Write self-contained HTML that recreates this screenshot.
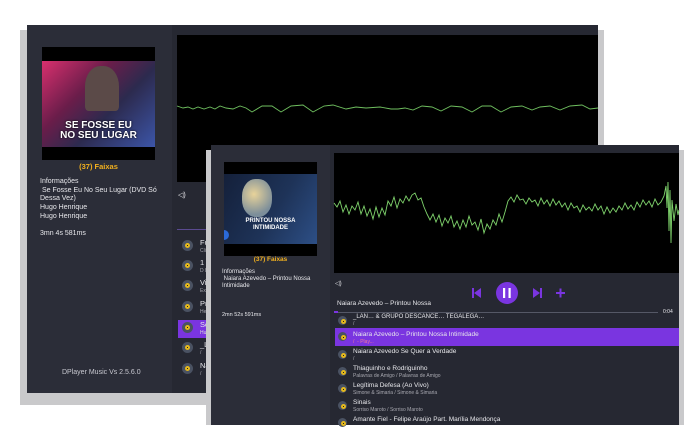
<!DOCTYPE html>
<html><head><meta charset="utf-8"><style>
*{margin:0;padding:0;box-sizing:border-box}
body{width:686px;height:425px;background:#fff;position:relative;overflow:hidden;font-family:"Liberation Sans",sans-serif;color:#e6e6ea}
.abs{position:absolute}
.t{position:absolute;font-size:7.5px;line-height:9px;color:#e8e8ec;white-space:nowrap}
.s{position:absolute;font-size:5px;color:#a8a8b0;white-space:nowrap}
.ic{position:absolute;width:11px;height:11px;border-radius:50%;background:#4a5262;}
.ic:after{content:"";position:absolute;left:3px;top:3px;width:5px;height:5px;border-radius:50%;background:#e5b91c}
.ic:before{content:"";position:absolute;left:5px;top:5px;width:1px;height:1px;background:#222;z-index:2}
</style></head><body>
<!-- back window shadow -->
<div class="abs" style="left:20px;top:30px;width:584px;height:375px;background:#c9c9cb"></div>
<!-- back window -->
<div class="abs" style="left:27px;top:25px;width:571px;height:368px;background:#2b2d38"></div>
<div class="abs" style="left:172px;top:25px;width:426px;height:368px;background:#262832"></div>
<div class="abs" style="left:177px;top:35px;width:421px;height:147px;background:#000"></div>
<svg class="abs" style="left:0;top:0" width="686" height="425">
<polyline fill="none" stroke="#6fbf5f" stroke-width="0.9" points="177,106 183,108 188,107 193,109 198,107 204,109 210,107 215,109 220,106 226,108 233,109 240,106 246,108 252,112 262,106 272,106 281,112 291,106 303,105 313,112 324,106 333,105 346,109 356,107 366,108 380,107 391,109 398,109 405,108 413,110 422,106 432,107 441,111 451,106 462,107 472,112 482,106 491,106 501,112 511,107 522,106 532,110 540,107 550,106 560,110 570,106 582,105 590,109 598,108"/>
</svg>
<div class="abs" style="left:42px;top:47px;width:113px;height:113px;background:#000"></div>
<div class="abs" style="left:42px;top:61px;width:113px;height:86px;background:linear-gradient(135deg,#d9306e 0%,#6a1d4a 35%,#2c2a4e 60%,#3c55a8 100%)"></div>
<div class="abs" style="left:85px;top:66px;width:34px;height:45px;border-radius:45% 45% 10% 10%;background:#5b4a48"></div>
<div class="abs" style="left:42px;top:121px;width:113px;text-align:center;font:bold 10px/10px 'Liberation Sans',sans-serif;color:#fff;text-shadow:0 0 2px #000">SE FOSSE EU<br>NO SEU LUGAR</div>
<div class="abs" style="left:42px;top:162px;width:113px;text-align:center;font:bold 7.5px 'Liberation Sans';color:#f2b01e">(37) Faixas</div>
<div class="t" style="left:40px;top:178px;line-height:8.7px;font-size:7px">Informações<br>&nbsp;Se Fosse Eu No Seu Lugar (DVD Só<br>Dessa Vez)<br>Hugo Henrique<br>Hugo Henrique<br><br>3mn 4s 581ms</div>
<div class="t" style="left:62px;top:368px;font-size:7px;color:#c8c8d0">DPlayer Music Vs 2.5.6.0</div>
<div class="t" style="left:178px;top:191px;font-size:7px">◁)</div>
<div class="abs" style="left:177px;top:229px;width:35px;height:1px;background:#5a4a90"></div>
<div class="abs" style="left:178px;top:320px;width:34px;height:18px;background:#7a35e0"></div>
<div class="ic" style="left:182px;top:240px"></div><div class="t" style="left:200px;top:238px">Fut</div><div class="s" style="left:200px;top:248px">Cli</div>
<div class="ic" style="left:182px;top:260px"></div><div class="t" style="left:200px;top:258px">1 M</div><div class="s" style="left:200px;top:268px">D B</div>
<div class="ic" style="left:182px;top:280px"></div><div class="t" style="left:200px;top:278px">Viv</div><div class="s" style="left:200px;top:288px">Exa</div>
<div class="ic" style="left:182px;top:301px"></div><div class="t" style="left:200px;top:299px">Pra</div><div class="s" style="left:200px;top:309px">Hen</div>
<div class="ic" style="left:182px;top:322px"></div><div class="t" style="left:200px;top:320px">Se</div><div class="s" style="left:200px;top:330px;color:#ddd">Hug</div>
<div class="ic" style="left:182px;top:342px"></div><div class="t" style="left:200px;top:340px">_L</div><div class="s" style="left:200px;top:350px">/</div>
<div class="ic" style="left:182px;top:363px"></div><div class="t" style="left:200px;top:361px">Nai</div><div class="s" style="left:200px;top:371px">/</div>

<!-- front window shadow -->
<div class="abs" style="left:206px;top:150px;width:478px;height:275px;background:#c9c9cb"></div>
<div class="abs" style="left:211px;top:145px;width:468px;height:280px;background:#2b2d38"></div>
<div class="abs" style="left:330px;top:145px;width:349px;height:280px;background:#262832"></div>
<div class="abs" style="left:334px;top:153px;width:345px;height:120px;background:#000"></div>
<svg class="abs" style="left:0;top:0" width="686" height="425">
<polyline fill="none" stroke="#7fd36c" stroke-width="0.9" points="334,203 337,207 340,201 343,212 346,205 349,214 352,206 355,210 358,202 361,214 364,206 367,216 370,209 373,219 376,207 379,217 382,208 385,215 388,201 391,206 394,197 397,208 400,199 403,203 406,196 409,201 412,195 415,193 418,200 421,198 424,207 427,214 430,220 433,214 436,222 439,215 442,226 445,218 448,223 451,216 454,227 457,221 460,229 463,220 466,227 469,216 472,225 475,222 478,230 481,219 484,233 487,224 490,229 493,220 496,225 499,214 502,222 505,212 508,201 511,197 514,202 517,195 520,200 523,199 526,204 529,198 532,202 535,200 538,206 541,198 544,204 547,200 550,206 553,199 556,205 559,201 562,207 565,203 568,210 571,203 574,208 577,206 580,212 583,205 586,210 589,207 592,211 595,204 598,210 601,206 604,214 607,207 610,213 613,208 616,212 619,206 622,210 625,203 628,209 631,205 634,210 637,202 640,207 643,200 646,205 649,201 652,207 655,199 658,205 661,202 664,196 666,186 667,208 668,182 669,231 670,190 671,243 672,200 674,221 676,204 678,215 679,210"/>
</svg>
<div class="abs" style="left:224px;top:162px;width:93px;height:94px;background:#000"></div>
<div class="abs" style="left:224px;top:174px;width:93px;height:70px;background:linear-gradient(120deg,#14203a 0%,#1e3358 55%,#2d4f86 100%)"></div>
<div class="abs" style="left:242px;top:179px;width:30px;height:38px;border-radius:45%;background:radial-gradient(circle at 40% 40%,#e8d39a,#7c8e9a 70%)"></div>
<div class="abs" style="left:224px;top:218px;width:93px;text-align:center;font:bold 6px/7px 'Liberation Sans';color:#fff">PRINTOU NOSSA<br>INTIMIDADE</div>
<div class="abs" style="left:224px;top:230px;width:5px;height:10px;background:#2b6ad8;border-radius:0 5px 5px 0"></div>
<div class="abs" style="left:224px;top:256px;width:93px;text-align:center;font:bold 6.5px 'Liberation Sans';color:#f2b01e">(37) Faixas</div>
<div class="t" style="left:222px;top:269px;font-size:6px;line-height:7px">Informações<br>&nbsp;Naiara Azevedo – Printou Nossa<br>Intimidade</div>
<div class="t" style="left:222px;top:311px;font-size:5.5px">2mn 52s 591ms</div>
<div class="t" style="left:335px;top:280px;font-size:6px">◁)</div>
<svg class="abs" style="left:0;top:0" width="686" height="425">
<rect x="472" y="288" width="2" height="10" fill="#7a35e0"/><path d="M481,288 L474,293 L481,298 Z" fill="#7a35e0"/>
<circle cx="507" cy="293" r="11" fill="#7a35e0"/><rect x="503" y="288" width="2.2" height="10" fill="#fff"/><rect x="508.5" y="288" width="2.2" height="10" fill="#fff"/>
<path d="M533,288 L540,293 L533,298 Z" fill="#7a35e0"/><rect x="540" y="288" width="2" height="10" fill="#7a35e0"/>
<rect x="556" y="292" width="9" height="2" fill="#7a35e0"/><rect x="559.5" y="288.5" width="2" height="9" fill="#7a35e0"/>
</svg>
<div class="t" style="left:337px;top:299px;font-size:6.5px">Naiara Azevedo – Printou Nossa</div>
<div class="abs" style="left:334px;top:312px;width:324px;height:1px;background:#555866"></div>
<div class="abs" style="left:334px;top:311px;width:4px;height:2px;background:#7a35e0"></div>
<div class="t" style="left:663px;top:308px;font-size:5px">0:04</div>
<div class="ic" style="left:338px;top:316px;width:9px;height:9px"></div><div class="t" style="left:353px;top:313px;font-size:6px">_LAN… & GRUPO DESCANCE… TEGALEGA…</div><div class="s" style="left:353px;top:321px">/</div>
<div class="abs" style="left:335px;top:328px;width:344px;height:18px;background:#7a35e0"></div>
<div class="ic" style="left:338px;top:332px;width:9px;height:9px"></div><div class="t" style="left:353px;top:330px;font-size:6.5px">Naiara Azevedo – Printou Nossa Intimidade</div><div class="s" style="left:353px;top:339px;color:#f07a9a">/ &nbsp;- Play...</div>
<div class="ic" style="left:338px;top:350px;width:9px;height:9px"></div><div class="t" style="left:353px;top:347px;font-size:6.5px">Naiara Azevedo Se Quer a Verdade</div><div class="s" style="left:353px;top:356px">/</div>
<div class="ic" style="left:338px;top:367px;width:9px;height:9px"></div><div class="t" style="left:353px;top:364px;font-size:6.5px">Thiaguinho e Rodriguinho</div><div class="s" style="left:353px;top:373px">Palavras de Amigo / Palavras de Amigo</div>
<div class="ic" style="left:338px;top:384px;width:9px;height:9px"></div><div class="t" style="left:353px;top:381px;font-size:6.5px">Legítima Defesa (Ao Vivo)</div><div class="s" style="left:353px;top:390px">Simone &amp; Simaria / Simone &amp; Simaria</div>
<div class="ic" style="left:338px;top:401px;width:9px;height:9px"></div><div class="t" style="left:353px;top:398px;font-size:6.5px">Sinais</div><div class="s" style="left:353px;top:407px">Sorriso Maroto / Sorriso Maroto</div>
<div class="ic" style="left:338px;top:418px;width:9px;height:9px"></div><div class="t" style="left:353px;top:415px;font-size:6.5px">Amante Fiel - Felipe Araújo Part. Marília Mendonça</div>
</body></html>
